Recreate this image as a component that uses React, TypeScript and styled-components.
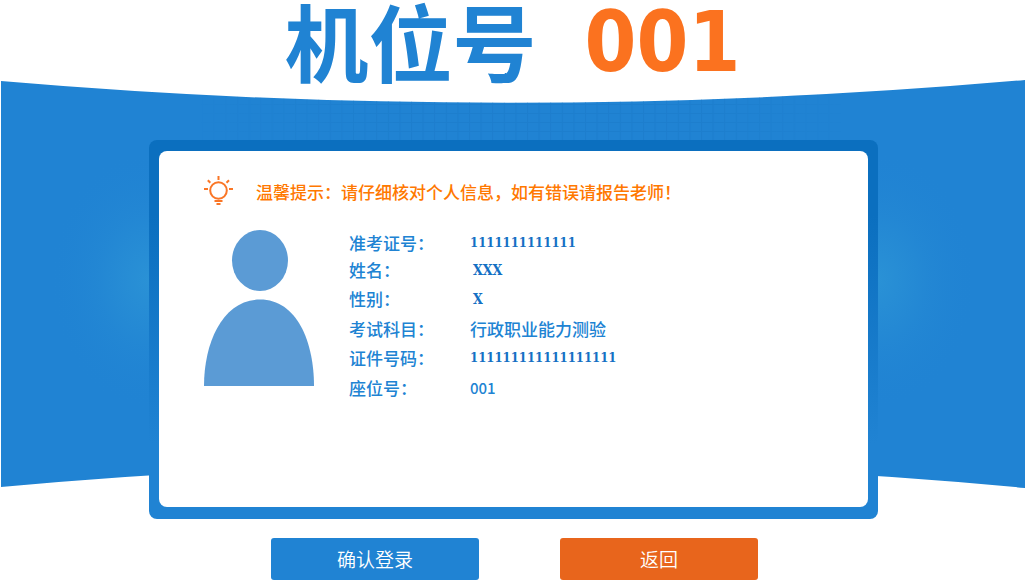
import React from 'react';
import styled, { createGlobalStyle } from 'styled-components';

const GlobalStyle = createGlobalStyle`
  * { box-sizing: border-box; }
  body {
    margin: 0;
    background: #fff;
    font-family: "Noto Sans CJK SC", sans-serif;
  }
`;

const Page = styled.div`
  display: flex;
  flex-direction: column;
`;

const Title = styled.h1`
  display: flex;
  justify-content: center;
  gap: 48px;
  height: 80px;
  margin: 0;
  color: #2083d3;
  font-size: 84px;
  font-weight: 700;
  line-height: 80px;
  white-space: nowrap;
`;

const SeatNumber = styled.span`
  color: #fb721f;
  font-family: "DejaVu Sans Condensed", "DejaVu Sans", sans-serif;
  font-size: 83px;
  font-stretch: condensed;
  line-height: 86px;
`;

const Stage = styled.main`
  display: grid;
  grid-template-columns: 1fr;
`;

const Backdrop = styled.svg`
  grid-area: 1 / 1;
  width: 100%;
  height: calc(100% - 31px);
  padding-left: 1px;
`;

const Card = styled.section`
  grid-area: 1 / 1;
  position: relative;
  margin: 60px 147px 0 149px;
  padding: 11px 10px 12px;
  border-radius: 8px;
  background: linear-gradient(#0b6fbf 0, #0b6fbf 20%, #2083d3 80%);
`;

const CardBody = styled.div`
  min-height: 356px;
  padding: 25px 44px;
  border-radius: 8px;
  background: #fff;
`;

const Tip = styled.p`
  display: flex;
  align-items: center;
  gap: 22px;
  height: 30px;
  margin: 0 0 24px;
  color: #ff7800;
  font-size: 17px;
  font-weight: 500;
`;

const Profile = styled.div`
  display: flex;
  gap: 35px;
`;

const Info = styled.dl`
  display: grid;
  grid-template-columns: 121px 1fr;
  grid-template-rows: 26px 27px 31px 29px 30px 29px;
  align-items: center;
  margin: 0;
  color: #2083d3;
  font-size: 17px;
  font-weight: 500;
  line-height: 26px;
`;

const valueStyles = {
  text: '',
  digits: `
    color: #1470c4;
    font-family: "DejaVu Serif Condensed", "DejaVu Serif", serif;
    font-stretch: condensed;
    font-size: 13px;
    font-weight: 700;
  `,
  letters: `
    padding-left: 3px;
    color: #1470c4;
    font-family: "DejaVu Serif Condensed", "DejaVu Serif", serif;
    font-stretch: condensed;
    font-size: 14px;
    font-weight: 700;
  `,
  seat: `
    font-size: 15px;
    font-weight: 500;
  `,
};

const Value = styled.dd<{ $kind: keyof typeof valueStyles }>`
  margin: 0;
  ${(p) => valueStyles[p.$kind]}
`;

const Actions = styled.footer`
  display: flex;
  justify-content: center;
  gap: 81px;
  padding: 19px 0 0 4px;
`;

const ActionButton = styled.button<{ $tone: string; $width: number }>`
  width: ${(p) => p.$width}px;
  height: 42px;
  padding: 0 0 2px;
  border: 0;
  border-radius: 3px;
  background: ${(p) => p.$tone};
  color: #fff;
  font-family: inherit;
  font-size: 19px;
  font-weight: 350;
  cursor: pointer;
`;

const rows: { label: string; value: string; kind: keyof typeof valueStyles }[] = [
  { label: '准考证号：', value: '1111111111111', kind: 'digits' },
  { label: '姓名：', value: 'XXX', kind: 'letters' },
  { label: '性别：', value: 'X', kind: 'letters' },
  { label: '考试科目：', value: '行政职业能力测验', kind: 'text' },
  { label: '证件号码：', value: '111111111111111111', kind: 'digits' },
  { label: '座位号：', value: '001', kind: 'seat' },
];

function Bulb() {
  return (
    <svg width="31" height="30" viewBox="0 0 31 30" fill="none" stroke="#fa7626" strokeWidth="2" aria-hidden="true">
      <circle cx="15.5" cy="14.5" r="8.3" />
      <path d="M15.5 0v4M1 13h4M26 13h4M4.800 4.300l2.500 2.500M26 4.300l-2.500 2.500M11.500 25h8M13.500 28h4" />
    </svg>
  );
}

function Portrait() {
  return (
    <svg width="111" height="156" viewBox="0 0 111 156" fill="#5b9bd5" aria-hidden="true">
      <ellipse cx="57" cy="30.500" rx="28" ry="30.500" />
      <path d="M1 156C1 112 20 69.500 57 69.500s54 42.500 54 86.500z" />
    </svg>
  );
}

export default function App() {
  return (
    <Page>
      <GlobalStyle />
      <Title>
        机位号<SeatNumber>001</SeatNumber>
      </Title>
      <Stage>
        <Backdrop viewBox="0 0 1024 408" preserveAspectRatio="none" aria-hidden="true">
          <defs>
            <radialGradient id="glow">
              <stop offset="0" stopColor="#2b93d6" stopOpacity="0.9" />
              <stop offset="0.5" stopColor="#2b93d6" stopOpacity="0.25" />
              <stop offset="1" stopColor="#2083d3" stopOpacity="0" />
            </radialGradient>
            <pattern id="mesh" width="11.600" height="9" x="4" y="6" patternUnits="userSpaceOnUse">
              <path d="M0 .5h11.600M.5 0v9" stroke="#1a79c8" strokeOpacity="0.5" />
            </pattern>
            <linearGradient id="fade">
              <stop offset="0" stopColor="#fff" stopOpacity="0" />
              <stop offset="0.3" stopColor="#fff" />
              <stop offset="0.8" stopColor="#fff" />
              <stop offset="1" stopColor="#fff" stopOpacity="0" />
            </linearGradient>
            <mask id="meshMask">
              <rect x="200" width="640" height="70" fill="url(#fade)" />
            </mask>
            <clipPath id="band">
              <path d="M0 1Q512 45 1024 0V408Q512 360 0 407z" />
            </clipPath>
          </defs>
          <g clipPath="url(#band)">
            <rect width="1024" height="408" fill="#2083d3" />
            <ellipse cx="148" cy="200" rx="100" ry="130" fill="url(#glow)" />
            <ellipse cx="876" cy="200" rx="100" ry="130" fill="url(#glow)" />
            <rect x="200" width="640" height="70" fill="url(#mesh)" mask="url(#meshMask)" />
          </g>
        </Backdrop>
        <Card>
          <CardBody>
            <Tip>
              <Bulb />
              温馨提示：请仔细核对个人信息，如有错误请报告老师！
            </Tip>
            <Profile>
              <Portrait />
              <Info>
                {rows.map((row) => (
                  <React.Fragment key={row.label}>
                    <dt>{row.label}</dt>
                    <Value $kind={row.kind}>{row.value}</Value>
                  </React.Fragment>
                ))}
              </Info>
            </Profile>
          </CardBody>
        </Card>
      </Stage>
      <Actions>
        <ActionButton type="button" $tone="#2083d3" $width={208}>确认登录</ActionButton>
        <ActionButton type="button" $tone="#e8651c" $width={198}>返回</ActionButton>
      </Actions>
    </Page>
  );
}
